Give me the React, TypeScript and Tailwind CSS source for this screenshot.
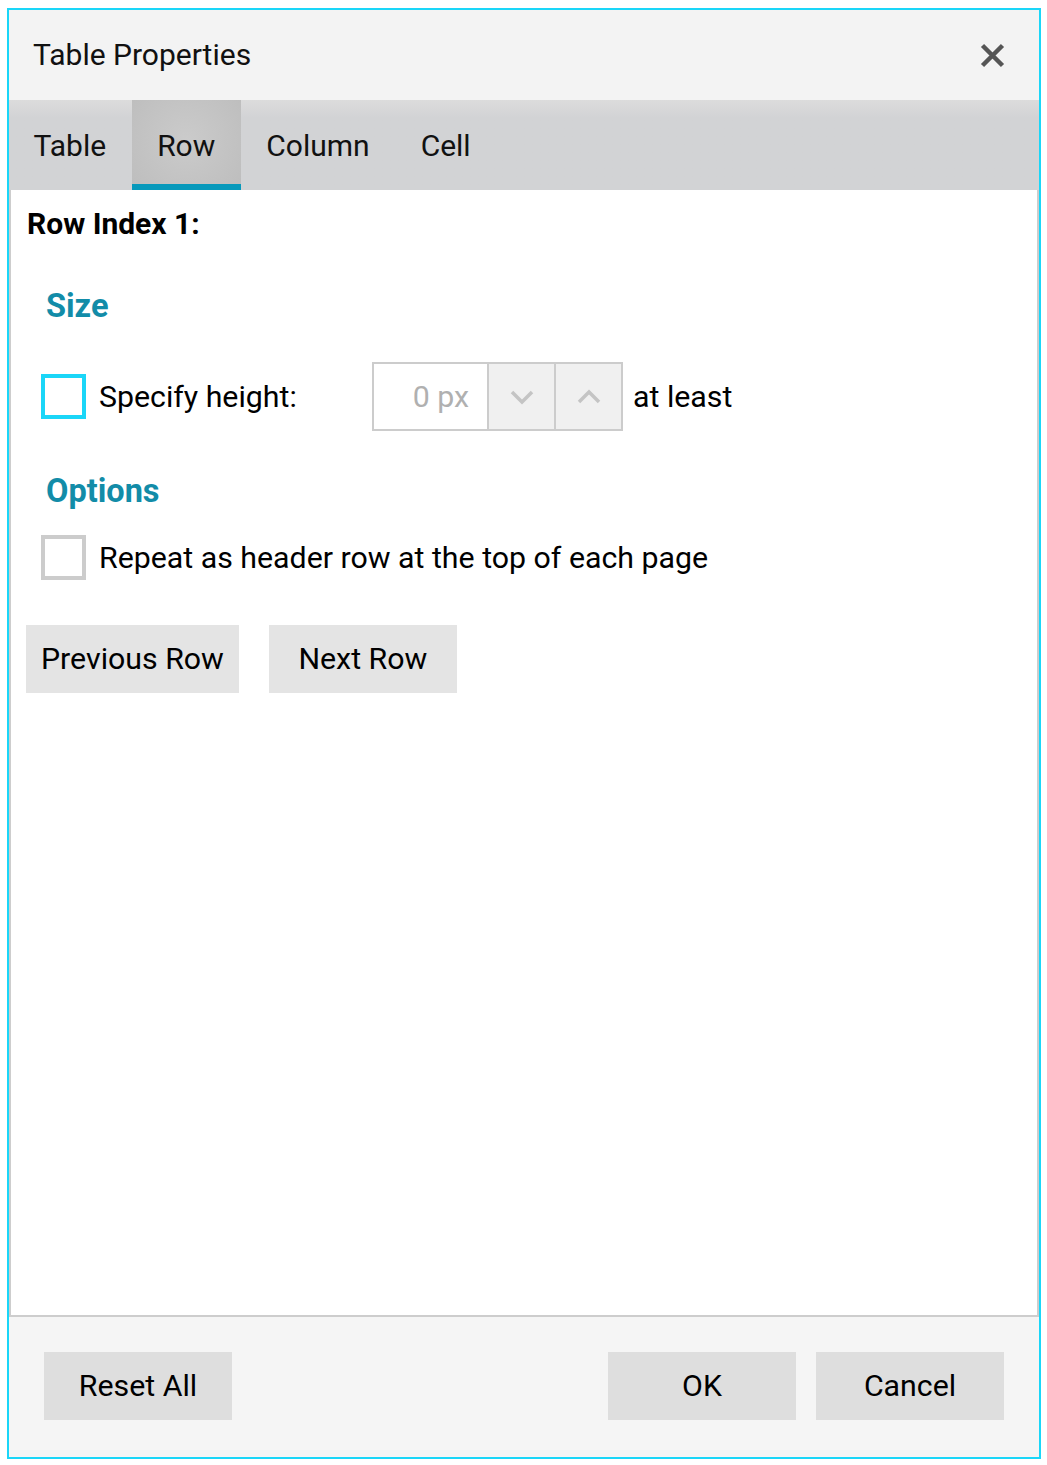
import { useState } from "react";

const tabs = ["Table", "Row", "Column", "Cell"];

function Checkbox({ checked, focused, onChange }: { checked: boolean; focused?: boolean; onChange: () => void }) {
  return (
    <button
      onClick={onChange}
      className={`w-[45px] h-[45px] shrink-0 bg-white border-[4px] flex items-center justify-center ${
        focused ? "border-[#1ad6f8]" : "border-[#cccccc]"
      }`}
    >
      {checked && (
        <svg className="w-7 h-7 text-[#0e8ca8]" viewBox="0 0 24 24" fill="none" stroke="currentColor" strokeWidth={3}>
          <path d="M5 12l5 5L19 7" />
        </svg>
      )}
    </button>
  );
}

function GrayButton({ label, className = "" }: { label: string; className?: string }) {
  return (
    <button className={`h-[68px] min-w-[188px] px-[15px] text-[30.3px] text-black ${className}`}>
      {label}
    </button>
  );
}

export default function App() {
  const [active, setActive] = useState("Row");
  const [specify, setSpecify] = useState(false);
  const [repeat, setRepeat] = useState(false);
  const [height, setHeight] = useState(0);

  return (
    <div
      className="w-[1047px] h-[1465px] bg-white pl-[7px] pt-[8px]"
      style={{ fontFamily: "Roboto, 'Liberation Sans', sans-serif" }}
    >
      <div className="w-[1034px] h-[1451px] border-2 border-[#1ad6f8] flex flex-col bg-[#f5f5f5]">
        {/* title bar */}
        <div className="h-[90px] bg-[#f3f3f3] flex items-center justify-between pl-[24px] pr-[34px]">
          <span className="text-[30px] leading-[36px] text-[#111]">Table Properties</span>
          <button aria-label="Close" className="w-[25px] h-[25px]">
            <svg className="w-[25px] h-[25px] text-[#555]" viewBox="0 0 25 25" fill="none" stroke="currentColor" strokeWidth={4.5}>
              <path d="M2.5 2.5l20 20M22.5 2.5l-20 20" />
            </svg>
          </button>
        </div>

        {/* tabs */}
        <div className="h-[90px] flex bg-gradient-to-b from-[#dcdcdc] to-[#d2d3d5] to-[20%]">
          {tabs.map((t) => (
            <button
              key={t}
              onClick={() => setActive(t)}
              className={`relative h-full px-[25.5px] first:pl-[24.5px] text-[30px] text-[#111] flex items-center ${
                active === t ? "bg-[radial-gradient(circle_at_50%_45%,#cbcbcb,#bdbdbd)]" : ""
              }`}
            >
              {t}
              {active === t && <span className="absolute left-0 right-0 bottom-0 h-[6px] bg-[#0799bb]" />}
            </button>
          ))}
        </div>

        {/* content */}
        <div className="flex-1 bg-white border-x-2 border-b-2 border-[#cdcdcd] flex flex-col">
          <div className="pl-[16px] pt-[16px] text-[30px] leading-[36px] font-bold text-black">Row Index 1:</div>

          <div className="pl-[35px] mt-[45px] text-[32.5px] leading-[38px] font-bold text-[#128ca8]">Size</div>

          <div className="flex items-center pl-[30px] mt-[37px] h-[69px]">
            <Checkbox checked={specify} focused onChange={() => setSpecify(!specify)} />
            <span className="ml-[13px] w-[273px] text-[30.3px] leading-[36px] text-black">Specify height:</span>
            <div className="flex h-[69px] border-2 border-[#cccccc]">
              <div className="w-[113px] bg-white flex items-center justify-end pr-[18px] text-[30.3px] text-[#b0b0b0]">
                {height} px
              </div>
              <button
                onClick={() => setHeight(Math.max(0, height - 1))}
                className="w-[67px] bg-[#f0f0f0] border-l-2 border-[#cccccc] flex items-center justify-center"
              >
                <svg className="w-[26px] h-[16px] text-[#c4c4c4]" viewBox="0 0 26 16" fill="none" stroke="currentColor" strokeWidth={3.5}>
                  <path d="M3 3l10 10L23 3" />
                </svg>
              </button>
              <button
                onClick={() => setHeight(height + 1)}
                className="w-[67px] bg-[#f0f0f0] border-l-2 border-[#cccccc] flex items-center justify-center"
              >
                <svg className="w-[26px] h-[16px] text-[#c4c4c4]" viewBox="0 0 26 16" fill="none" stroke="currentColor" strokeWidth={3.5}>
                  <path d="M3 13L13 3l10 10" />
                </svg>
              </button>
            </div>
            <span className="ml-[10px] text-[30.3px] leading-[36px] text-black">at least</span>
          </div>

          <div className="pl-[35px] mt-[41px] text-[32.5px] leading-[38px] font-bold text-[#128ca8]">Options</div>

          <div className="flex items-center pl-[30px] mt-[25px]">
            <Checkbox checked={repeat} onChange={() => setRepeat(!repeat)} />
            <span className="ml-[13px] text-[30.3px] leading-[36px] text-black">
              Repeat as header row at the top of each page
            </span>
          </div>

          <div className="flex gap-[30px] pl-[15px] mt-[45px]">
            <GrayButton label="Previous Row" className="bg-[#e4e4e4]" />
            <GrayButton label="Next Row" className="bg-[#e4e4e4]" />
          </div>
        </div>

        {/* footer */}
        <div className="h-[140px] bg-[#f5f5f5] flex items-start justify-between px-[35px] pt-[35px]">
          <GrayButton label="Reset All" className="bg-[#dedede]" />
          <div className="flex gap-[20px]">
            <GrayButton label="OK" className="bg-[#dedede]" />
            <GrayButton label="Cancel" className="bg-[#dedede]" />
          </div>
        </div>
      </div>
    </div>
  );
}
